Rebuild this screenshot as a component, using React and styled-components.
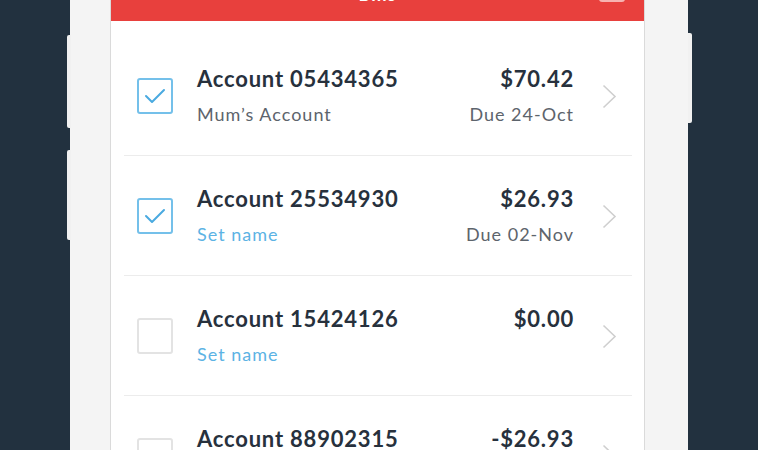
import React from "react";
import styled, { createGlobalStyle } from "styled-components";

const GlobalStyle = createGlobalStyle`
  html, body {
    margin: 0;
    padding: 0;
    background: #22313f;
    overflow: hidden;
  }
  body {
    font-family: "Lato", "Open Sans", sans-serif;
    -webkit-font-smoothing: antialiased;
  }
`;

const Stage = styled.div`
  width: 758px;
  height: 450px;
  display: flex;
  justify-content: center;
  overflow: hidden;
`;

const Phone = styled.div`
  position: relative;
  width: 618px;
  margin-top: -43px;
  padding: 0 43px 0 40px;
  box-sizing: border-box;
  background: #f4f4f4;
`;

const SideButton = styled.span`
  position: absolute;
  width: 4px;
  background: #f1f1f1;
  border-radius: ${(p) => (p.$right ? "0 2px 2px 0" : "2px 0 0 2px")};
  ${(p) => (p.$right ? "right: -4px;" : "left: -3px;")}
  top: ${(p) => p.$top}px;
  height: ${(p) => p.$height}px;
`;

const Screen = styled.div`
  background: #ffffff;
  border-left: 1px solid #dadada;
  border-right: 1px solid #dadada;
  min-height: 560px;
`;

const Header = styled.header`
  position: relative;
  height: 64px;
  background: #e8403d;
  display: flex;
  align-items: flex-end;
  justify-content: center;
  color: #fff;
`;

const HeaderTitle = styled.h1`
  margin: 0 0 5px;
  height: 44px;
  line-height: 44px;
  font-size: 18px;
  font-weight: 700;
  letter-spacing: 1px;
`;

const HeaderIcon = styled.svg`
  position: absolute;
  right: 19px;
  bottom: 19px;
`;

const List = styled.ul`
  list-style: none;
  margin: 15px 0 0;
  padding: 0;
`;

const Row = styled.li`
  position: relative;
  height: 120px;
  display: flex;
  align-items: center;
  padding: 0 27px 0 26px;

  &::after {
    content: "";
    position: absolute;
    left: 13px;
    right: 12px;
    bottom: 0;
    height: 1px;
    background: #ececec;
  }
`;

const Check = styled.span`
  flex: none;
  width: 36px;
  height: 36px;
  box-sizing: border-box;
  border: 2px solid ${(p) => (p.$checked ? "#74c0ea" : "#e3e3e3")};
  border-radius: 3px;
  display: flex;
  align-items: center;
  justify-content: center;
  margin-right: 24px;
`;

const Info = styled.div`
  flex: 1;
  display: flex;
  flex-direction: column;
  gap: 10px;
  min-width: 0;
`;

const Side = styled(Info)`
  flex: none;
  align-items: flex-end;
  margin-right: 28px;
`;

const Title = styled.div`
  font-size: 22px;
  line-height: 26px;
  font-weight: 700;
  color: #27313d;
  letter-spacing: 0.8px;
`;

const Sub = styled.div`
  font-size: 18px;
  line-height: 24px;
  height: 24px;
  letter-spacing: 1px;
  color: ${(p) => (p.$link ? "#5cb3e4" : "#5d646c")};
`;

const Chevron = () => (
  <svg width="15" height="25" viewBox="0 0 15 25">
    <polyline points="1.5,1.5 13,12.5 1.5,23.5" fill="none" stroke="#cfcfcf" strokeWidth="1.6" />
  </svg>
);

const Tick = () => (
  <svg width="22" height="18" viewBox="0 0 22 18">
    <polyline points="2,9 8,15 20,3" fill="none" stroke="#4aaae0" strokeWidth="2" strokeLinecap="round" strokeLinejoin="round" />
  </svg>
);

const accounts = [
  { id: "05434365", name: "Mum’s Account", amount: "$70.42", due: "Due 24-Oct", checked: true },
  { id: "25534930", name: null, amount: "$26.93", due: "Due 02-Nov", checked: true },
  { id: "15424126", name: null, amount: "$0.00", due: "", checked: false },
  { id: "88902315", name: null, amount: "-$26.93", due: "", checked: false },
];

export default function App() {
  return (
    <>
      <GlobalStyle />
      <Stage>
        <Phone>
          <SideButton $top={78} $height={93} />
          <SideButton $top={193} $height={90} />
          <SideButton $right $top={76} $height={90} />
          <Screen>
            <Header>
              <HeaderTitle>Bills</HeaderTitle>
              <HeaderIcon width="26" height="22" viewBox="0 0 26 22">
                <rect x="1" y="1" width="24" height="20" rx="2" fill="none" stroke="#f7b3b1" strokeWidth="2" />
              </HeaderIcon>
            </Header>
            <List>
              {accounts.map((a) => (
                <Row key={a.id}>
                  <Check $checked={a.checked}>{a.checked && <Tick />}</Check>
                  <Info>
                    <Title>Account {a.id}</Title>
                    <Sub $link={!a.name}>{a.name || "Set name"}</Sub>
                  </Info>
                  <Side>
                    <Title>{a.amount}</Title>
                    <Sub>{a.due}</Sub>
                  </Side>
                  <Chevron />
                </Row>
              ))}
            </List>
          </Screen>
        </Phone>
      </Stage>
    </>
  );
}
